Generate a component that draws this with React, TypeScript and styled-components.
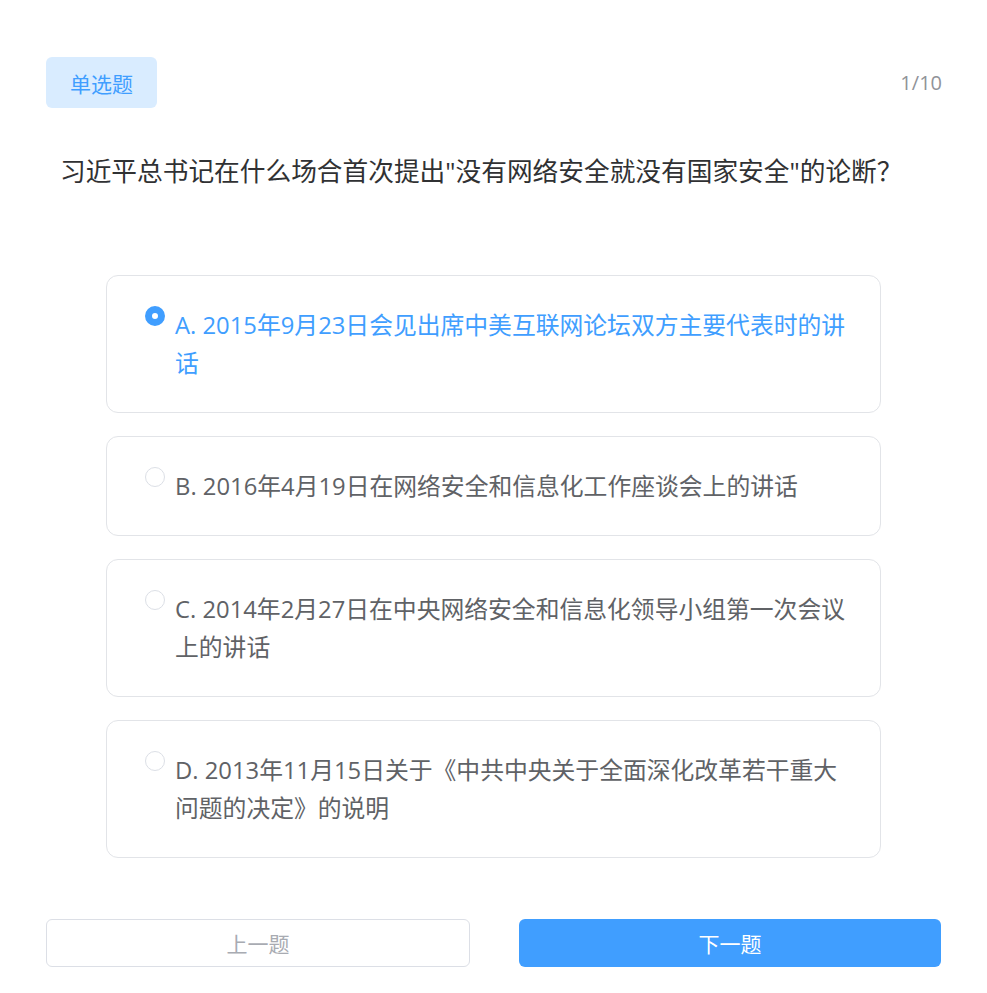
import React, { useState } from 'react';
import styled, { createGlobalStyle } from 'styled-components';

const GlobalStyle = createGlobalStyle`
  body {
    margin: 0;
    background: #ffffff;
    font-family: "Open Sans", "Noto Sans CJK SC", sans-serif;
  }
`;

const options = [
  { key: 'A', text: '2015年9月23日会见出席中美互联网论坛双方主要代表时的讲话' },
  { key: 'B', text: '2016年4月19日在网络安全和信息化工作座谈会上的讲话' },
  { key: 'C', text: '2014年2月27日在中央网络安全和信息化领导小组第一次会议上的讲话' },
  { key: 'D', text: '2013年11月15日关于《中共中央关于全面深化改革若干重大问题的决定》的说明' }
];

const App = () => {
  const [selected, setSelected] = useState('A');

  return (
    <Page>
      <GlobalStyle />
      <Header>
        <Tag>单选题</Tag>
        <Counter>1/10</Counter>
      </Header>
      <Question>
        习近平总书记在什么场合首次提出"没有网络安全就没有国家安全"的论断？
      </Question>
      <OptionList>
        {options.map((opt) => {
          const active = opt.key === selected;
          return (
            <Option key={opt.key} onClick={() => setSelected(opt.key)}>
              <Radio active={active} />
              <OptionText active={active}>
                {opt.key}. {opt.text}
              </OptionText>
            </Option>
          );
        })}
      </OptionList>
      <Footer>
        <PrevButton disabled>上一题</PrevButton>
        <NextButton>下一题</NextButton>
      </Footer>
    </Page>
  );
};

export default App;

const Page = styled.div`
  padding: 57px 46px 26px;
  display: flex;
  flex-direction: column;
`;

const Header = styled.div`
  display: flex;
  justify-content: space-between;
  align-items: center;
`;

const Tag = styled.div`
  width: 111px;
  height: 51px;
  display: flex;
  align-items: center;
  justify-content: center;
  background: #d9ecff;
  color: #409eff;
  border-radius: 6px;
  font-size: 21px;
  font-family: "Noto Sans CJK SC", sans-serif;
`;

const Counter = styled.div`
  font-size: 20px;
  color: #909399;
  margin-right: -1px;
`;

const Question = styled.div`
  margin-top: 46px;
  padding: 0 14px;
  font-size: 25.7px;
  line-height: 36px;
  color: #303133;
`;

const OptionList = styled.div`
  margin: 85px 60px 0;
  display: flex;
  flex-direction: column;
  gap: 23px;
`;

const Option = styled.div`
  display: flex;
  align-items: flex-start;
  gap: 10px;
  padding: 30px 24px 30px 38px;
  border: 1px solid #e2e4e8;
  border-radius: 12px;
  cursor: pointer;
`;

const Radio = styled.span<{ active: boolean }>`
  flex-shrink: 0;
  box-sizing: border-box;
  width: 20px;
  height: 20px;
  border-radius: 50%;
  border: ${(p) => (p.active ? '7px solid #409eff' : '1px solid #dcdfe6')};
  background: #ffffff;
`;

const OptionText = styled.div<{ active: boolean }>`
  font-size: 23.8px;
  line-height: 38px;
  color: ${(p) => (p.active ? '#409eff' : '#606266')};
`;

const Footer = styled.div`
  margin-top: 61px;
  display: flex;
  gap: 49px;
`;

const PrevButton = styled.button`
  flex: 1;
  height: 48px;
  border: 1px solid #dcdfe6;
  border-radius: 6px;
  background: #ffffff;
  color: #a8abb2;
  font-size: 21px;
  font-family: "Noto Sans CJK SC", sans-serif;
`;

const NextButton = styled.button`
  flex: 1;
  height: 48px;
  border: none;
  border-radius: 6px;
  background: #409eff;
  color: #ffffff;
  font-size: 21px;
  font-family: "Noto Sans CJK SC", sans-serif;
  cursor: pointer;
`;
